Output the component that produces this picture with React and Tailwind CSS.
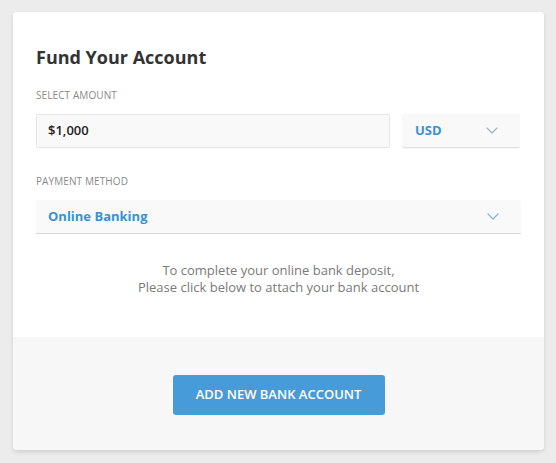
const Chevron = ({ color }) => (
  <svg width="12" height="7" viewBox="0 0 12 7" fill="none">
    <path d="M1 1l5 5 5-5" stroke={color} strokeWidth="1.2" strokeLinecap="round" strokeLinejoin="round" />
  </svg>
);

const Label = ({ children }) => (
  <div className="text-[10px] leading-[14px] uppercase text-[#8a8a8a] tracking-[0.01em]">{children}</div>
);

export default function App() {
  return (
    <div className="min-h-[463px] bg-[#ececec] pt-[12px] pl-[13px] pr-[12px] font-['Open_Sans',sans-serif]">
      <div className="w-[531px] rounded-[4px] bg-white shadow-[0_2px_4px_rgba(0,0,0,0.12)] overflow-hidden">
        {/* form area */}
        <div className="px-[23px] pt-[33px] pb-[41px]">
          <h1 className="text-[18px] leading-[24px] font-bold text-[#333]">Fund Your Account</h1>

          <div className="mt-[19px]">
            <Label>Select Amount</Label>
          </div>
          <div className="mt-[12px] flex gap-[12px]">
            <div className="w-[354px] h-[34px] flex items-center px-[11px] bg-[#f9f9f9] border border-[#e6e6e6] rounded-[2px] text-[13px] font-semibold text-[#222]">
              $1,000
            </div>
            <div className="w-[118px] h-[34px] flex items-center justify-between pl-[13px] pr-[22px] bg-[#f9f9f9] border-b border-[#e0e0e0] rounded-[2px] shadow-[0_1px_1px_rgba(0,0,0,0.04)]">
              <span className="text-[13px] font-bold text-[#3d8fd5]">USD</span>
              <Chevron color="#9fb3c6" />
            </div>
          </div>

          <div className="mt-[26px]">
            <Label>Payment Method</Label>
          </div>
          <div className="mt-[12px] h-[34px] flex items-center justify-between pl-[12px] pr-[22px] bg-[#f9f9f9] border-b border-[#d8d8d8] rounded-t-[2px]">
            <span className="text-[13px] font-bold text-[#3d8fd5]">Online Banking</span>
            <Chevron color="#7fb6e2" />
          </div>

          <p className="mt-[28px] text-center text-[13px] leading-[17px] text-[#7a7a7a]">
            To complete your online bank deposit,
            <br />
            Please click below to attach your bank account
          </p>
        </div>

        {/* footer */}
        <div className="h-[113px] bg-[#f7f7f7] flex justify-center pt-[38px]">
          <button className="w-[212px] h-[40px] rounded-[3px] bg-[#479bd8] text-white text-[13px] font-semibold uppercase">
            Add New Bank Account
          </button>
        </div>
      </div>
    </div>
  );
}
